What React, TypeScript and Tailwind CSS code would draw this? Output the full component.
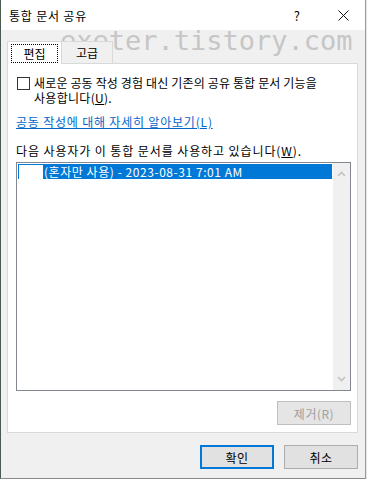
const FONT = "font-['Malgun_Gothic','Noto_Sans_CJK_KR','Noto_Sans',sans-serif]";

function Chevron({ up }: { up?: boolean }) {
  return (
    <svg width="9" height="6" viewBox="0 0 9 6" className="block">
      <path
        d={up ? "M1 5 L4.5 1.5 L8 5" : "M1 1 L4.5 4.5 L8 1"}
        fill="none"
        stroke="#c2c2c2"
        strokeWidth="1.6"
      />
    </svg>
  );
}

export default function App() {
  return (
    <div className={`relative h-[479px] w-[367px] overflow-hidden bg-[#e6e6e6] text-[12px] text-black ${FONT}`}>
      <div className="flex h-[479px] w-[366px] flex-col border-r border-b border-l border-r-[#9a9a9a] border-b-[#8a8a8a] border-l-[#4a5a50]">
        {/* title bar */}
        <div className="flex h-[30px] shrink-0 items-center bg-white pl-[8px]">
          <span className="leading-[15px] tracking-[0.8px]">통합 문서 공유</span>
          <span className="ml-auto mr-[38px] text-[13px] leading-[15px]">?</span>
          <svg width="11" height="11" viewBox="0 0 11 11" className="mr-[16px]">
            <path d="M0.5 0.5 L10.5 10.5 M10.5 0.5 L0.5 10.5" stroke="#111" strokeWidth="1" />
          </svg>
        </div>

        {/* body */}
        <div className="flex flex-1 flex-col bg-[#f0f0f0] pt-[11px] pl-[6px] pr-[7px]">
          {/* tabs */}
          <div className="relative z-10 flex h-[22px] items-end">
            <div className="flex h-[23px] w-[55px] translate-y-[1px] items-center justify-center border border-b-0 border-[#d9d9d9] bg-white">
              <span className="flex h-[19px] w-[47px] items-center justify-center border border-dotted border-black leading-[15px]">
                편집
              </span>
            </div>
            <div className="flex h-[22px] w-[51px] items-center justify-center border border-l-0 border-b-0 border-[#d9d9d9] bg-[#f0f0f0] leading-[15px]">
              고급
            </div>
          </div>

          {/* panel */}
          <div className="flex h-[370px] w-[351px] flex-col border border-[#d9d9d9] bg-white pt-[11px] pl-[8px]">
            <div className="flex items-start">
              <div className="mt-[2px] ml-[1px] h-[13px] w-[13px] shrink-0 border border-[#333]" />
              <div className="ml-[4px] leading-[15px]">
                <div className="whitespace-nowrap tracking-[0.15px]">새로운 공동 작성 경험 대신 기존의 공유 통합 문서 기능을</div>
                <div className="tracking-[0.3px]">
                  사용합니다(<span className="underline">U</span>).
                </div>
              </div>
            </div>
            <div className="mt-[9px] whitespace-nowrap leading-[15px] tracking-[0.8px] text-[#0066cc] underline">
              공동 작성에 대해 자세히 알아보기(L)
            </div>
            <div className="mt-[14px] whitespace-nowrap leading-[15px] tracking-[0.9px]">
              다음 사용자가 이 통합 문서를 사용하고 있습니다(<span className="underline">W</span>).
            </div>

            {/* list box */}
            <div className="mt-[4px] flex h-[229px] w-[335px] border border-[#828790] bg-white">
              <div className="flex-1 p-[1px]">
                <div className="flex h-[15px]">
                  <div className="h-[15px] w-[25px] border-t border-l border-[#0078d7] bg-white" />
                  <div className="flex-1 whitespace-nowrap bg-[#0078d7] pl-[1px] leading-[15px] tracking-[0.55px] text-white">
                    (혼자만 사용) - 2023-08-31 7:01 AM
                  </div>
                </div>
              </div>
              <div className="flex w-[17px] flex-col items-center justify-between bg-[#f0f0f0] pt-[8px] pb-[8px]">
                <Chevron up />
                <Chevron />
              </div>
            </div>

            <div className="mt-[10px] flex w-[335px] justify-end">
              <div className="flex h-[24px] w-[74px] items-center justify-center border border-[#bfbfbf] bg-[#e5e5e5] leading-[15px] tracking-[0.5px] text-[#a0a0a0]">
                제거(R)
              </div>
            </div>
          </div>

          {/* buttons */}
          <div className="mt-[12px] flex justify-end gap-[10px]">
            <div className="flex h-[24px] w-[74px] items-center justify-center border-2 border-[#0078d7] bg-[#e1e1e1] leading-[15px] tracking-[0.5px]">
              확인
            </div>
            <div className="flex h-[24px] w-[74px] items-center justify-center border border-[#adadad] bg-[#e1e1e1] leading-[15px] tracking-[0.5px]">
              취소
            </div>
          </div>
        </div>
      </div>

      {/* blog watermark */}
      <div className="pointer-events-none absolute top-[27px] left-[60px] font-['DejaVu_Sans_Mono',monospace] text-[27px] leading-[27px] text-[#c6c6c6]">
        exeter.tistory.com
      </div>
    </div>
  );
}
